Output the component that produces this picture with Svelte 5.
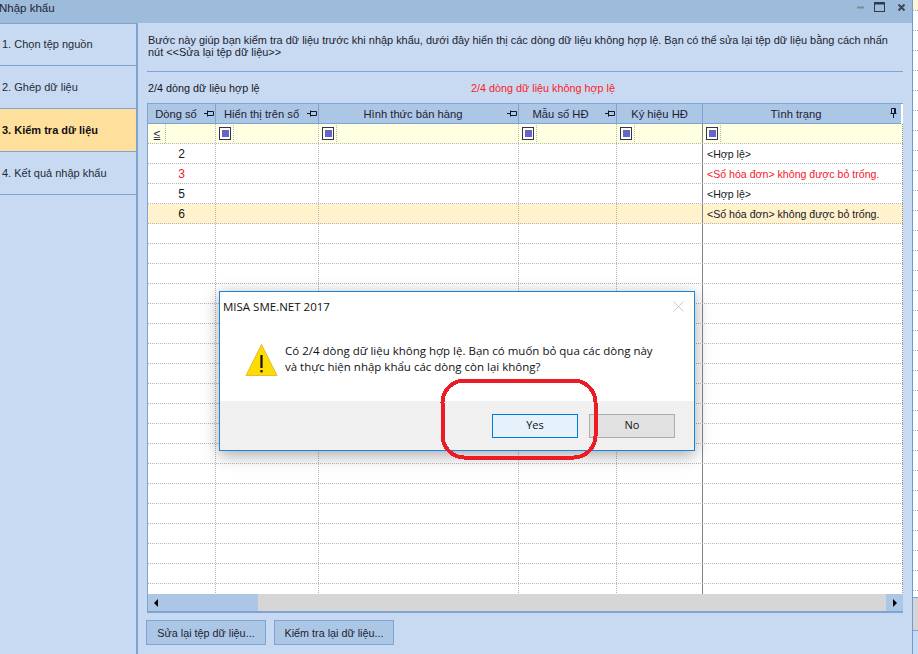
<script>
  const cols = [
    { t: 'Dòng số', pin: 'h' },
    { t: 'Hiển thị trên sổ', pin: 'h' },
    { t: 'Hình thức bán hàng', pin: 'h' },
    { t: 'Mẫu số HĐ', pin: 'h', cls: 'wide' },
    { t: 'Ký hiệu HĐ', pin: '', cls: 'nopin' },
    { t: 'Tình trạng', pin: 'v', cls: 'last' }
  ];
  const steps = ['1. Chọn tệp nguồn', '2. Ghép dữ liệu', '3. Kiểm tra dữ liệu', '4. Kết quả nhập khẩu'];
  const ok = '<Hợp lệ>';
  const bad = '<Số hóa đơn> không được bỏ trống.';
  const rows = [
    { n: '2', s: ok },
    { n: '3', s: bad, cls: 'err' },
    { n: '5', s: ok },
    { n: '6', s: bad, cls: 'sel' },
    ...Array.from({ length: 19 }, () => ({ n: '', s: '' }))
  ];
  const strip = Array.from({ length: 29 });
</script>

<div class="app">
  <div class="window">
    <header class="title">
      <span class="title-text">Nhập khẩu</span>
      <div class="controls">
        <svg width="7" height="3" viewBox="0 0 7 3"><rect width="7" height="2" y="0.5" fill="#7f8b99" /></svg>
        <svg width="11" height="10" viewBox="0 0 11 10"><rect x="0.5" y="0.5" width="10" height="9" fill="none" stroke="#303a48" /><rect x="0" y="0" width="11" height="2.5" fill="#303a48" /></svg>
        <svg class="close" width="7" height="7" viewBox="0 0 7 7"><path d="M.5.5l6 6M6.5.5l-6 6" stroke="#3d4753" stroke-width="2" /></svg>
      </div>
    </header>
    <div class="body">
      <nav class="side">
        {#each steps as s, i}
          <div class="step" class:active={i === 2}>{s}</div>
        {/each}
      </nav>
      <main class="main">
        <p class="intro">Bước này giúp bạn kiểm tra dữ liệu trước khi nhập khẩu, dưới đây hiển thị các dòng dữ liệu không hợp lệ. Bạn có thể sửa lại tệp dữ liệu bằng cách nhấn nút &lt;&lt;Sửa lại tệp dữ liệu&gt;&gt;</p>
        <div class="status">
          <span class="valid">2/4 dòng dữ liệu hợp lệ</span>
          <span class="invalid">2/4 dòng dữ liệu không hợp lệ</span>
        </div>
        <section class="grid">
          <div class="row head">
            {#each cols as c}
              <div class="hcell {c.cls ?? ''}">
                <span>{c.t}</span>
                {#if c.pin === 'h'}
                  <svg class="pin" width="10" height="7" viewBox="0 0 10 7"><path d="M0 3.5h3.5M3.5.5v6M3.5 1.5h6v4h-6" fill="none" stroke="#10182a" /></svg>
                {:else if c.pin === 'v'}
                  <svg class="pin pinv" width="7" height="10" viewBox="0 0 7 10"><path d="M1.5.5h4v5h-4zM.5 5.5h6M3.5 6v4" fill="none" stroke="#10182a" /><path d="M4.5 1v4" stroke="#10182a" /></svg>
                {/if}
              </div>
            {/each}
          </div>
          <div class="row filter">
            {#each cols as c, i}
              <div class="fcell" class:status-col={i === 5} class:before-status={i === 4}>
                {#if i === 0}
                  <span class="fbox le">≤</span>
                {:else}
                  <span class="fbox"><i></i></span>
                {/if}
              </div>
            {/each}
          </div>
          <div class="rows">
            {#each rows as r}
              <div class="row data {r.cls ?? ''}">
                <div class="cell num">{r.n}</div>
                <div class="cell"></div>
                <div class="cell"></div>
                <div class="cell"></div>
                <div class="cell"></div>
                <div class="cell state">{r.s}</div>
              </div>
            {/each}
          </div>
          <div class="hscroll">
            <div class="thumb"><svg width="5" height="8" viewBox="0 0 5 8"><path d="M4 0v8L0 4z" fill="#000" /></svg></div>
            <div class="track"></div>
            <div class="arrow"><svg width="5" height="8" viewBox="0 0 5 8"><path d="M0 0v8l4-4z" fill="#000" /></svg></div>
          </div>
        </section>
        <div class="actions">
          <button class="btn b1">Sửa lại tệp dữ liệu...</button>
          <button class="btn b2">Kiểm tra lại dữ liệu...</button>
        </div>
      </main>
    </div>
  </div>

  <aside class="strip">
    <div class="strip-top"></div>
    {#each strip as _}
      <div class="strip-row"></div>
    {/each}
    <div class="strip-grey"></div>
    <div class="strip-end"></div>
  </aside>

  <div class="dialog">
    <div class="d-title">
      <span>MISA SME.NET 2017</span>
      <svg width="11" height="11" viewBox="0 0 11 11"><path d="M.5.5l10 10M10.5.5l-10 10" stroke="#c9c9c9" /></svg>
    </div>
    <div class="d-body">
      <svg class="warn" width="33" height="33" viewBox="0 0 33 33">
        <path d="M16.5 1.5L32 32.5H1z" fill="#ffdc00" stroke="#e8b93a" />
        <rect x="15.4" y="12" width="2.2" height="13" fill="#111" />
        <rect x="15.4" y="27" width="2.2" height="2.4" fill="#111" />
      </svg>
      <p>Có 2/4 dòng dữ liệu không hợp lệ. Bạn có muốn bỏ qua các dòng này<br />và thực hiện nhập khẩu các dòng còn lại không?</p>
    </div>
    <div class="d-foot">
      <button class="d-btn yes">Yes</button>
      <button class="d-btn no">No</button>
    </div>
  </div>

  <svg class="mark" width="160" height="84" viewBox="0 0 160 84" shape-rendering="crispEdges">
    <rect x="2.5" y="2.5" width="153" height="77" rx="22" fill="none" stroke="#ed1c24" stroke-width="4" />
  </svg>
</div>

<style>
  :global(body) {
    margin: 0;
    background: #fff;
  }
  * {
    box-sizing: border-box;
  }
  .app {
    position: relative;
    display: flex;
    width: 918px;
    height: 654px;
    overflow: hidden;
    font-family: "Liberation Sans", Arial, sans-serif;
    font-size: 11px;
    color: #15171c;
  }
  .window {
    width: 913px;
    height: 654px;
    display: flex;
    flex-direction: column;
    background: #c8daf1;
    border-right: 1px solid #6f9bd2;
  }
  .title {
    height: 23px;
    flex: none;
    background: #9dbbdb;
    display: flex;
    align-items: center;
    justify-content: space-between;
    font-size: 11.5px;
    padding-right: 7px;
  }
  .title-text {
    margin-left: -1px;
    margin-top: -7px;
    color: #231f33;
  }
  .controls {
    display: flex;
    align-items: center;
    gap: 10px;
    margin-top: -9px;
  }
  .close {
    margin-left: 3px;
  }
  .body {
    flex: 1;
    display: flex;
    min-height: 0;
  }
  .side {
    width: 138px;
    flex: none;
    border-right: 2px solid #7fa3d2;
    border-top: 1px solid #7fa3d2;
  }
  .step {
    height: 43px;
    line-height: 43px;
    border-bottom: 1px solid #7fa3d2;
    padding-left: 2px;
    color: #232a38;
  }
  .step:first-child {
    height: 42px;
    line-height: 41px;
  }
  .step.active {
    background: #ffdf9c;
    font-weight: 700;
    color: #101010;
  }
  .main {
    flex: 1;
    min-width: 0;
    padding: 0 9px 0 9px;
    display: flex;
    flex-direction: column;
  }
  .intro {
    margin: 11px 0 0;
    height: 38px;
    line-height: 12px;
    font-size: 10.93px;
    padding-left: 1px;
    border-bottom: 1px solid #7fa3d2;
    color: #1b2230;
  }
  .status {
    height: 31px;
    flex: none;
    display: flex;
    align-items: center;
    line-height: 14px;
    font-size: 10.8px;
  }
  .valid {
    width: 324px;
    padding-left: 1px;
  }
  .invalid {
    color: #fb1a2a;
  }
  .grid {
    width: 756px;
    height: 510px;
    flex: none;
    display: flex;
    flex-direction: column;
    background: #fff;
    border: solid #7fa3d2;
    border-width: 1px 0 2px 1px;
  }
  .row {
    display: grid;
    grid-template-columns: 68px 103px 200px 98px 86px 200px;
    flex: none;
  }
  .head {
    height: 20px;
    background: #acc7e6;
    border-bottom: 1px solid #7fa3d2;
  }
  .hcell {
    position: relative;
    text-align: center;
    line-height: 20px;
    font-size: 11.2px;
    border-right: 1px solid #7fa3d2;
    color: #1c2233;
    padding-right: 11px;
  }
  .hcell.wide {
    padding-right: 14px;
  }
  .hcell.nopin {
    padding-right: 0;
  }
  .hcell.last {
    border-right: 2px solid #fff;
    padding-right: 12px;
  }
  .pin {
    position: absolute;
    right: 1px;
    top: 6px;
  }
  .pinv {
    right: 4px;
    top: 4px;
  }
  .filter {
    height: 20px;
    background: #ffffe1;
    border-bottom: 1px dotted #b5b5b5;
  }
  .fcell {
    border-right: 1px dotted #b5b5b5;
    padding: 3px 0 0 3px;
  }
  .fcell.status-col {
    border-right: 1px dotted #888;
  }
  .fcell.before-status {
    border-right: 1px solid #808690;
  }
  .fbox {
    display: flex;
    align-items: center;
    justify-content: center;
    width: 12px;
    height: 13px;
    border: 1px solid #2f2f6d;
    position: relative;
  }
  .fbox::after {
    content: "";
    position: absolute;
    top: -3px;
    bottom: -3px;
    left: 13px;
    border-right: 1px dotted #b5b5b5;
  }
  .fbox i {
    width: 7px;
    height: 7px;
    background: #6464cc;
  }
  .le {
    border: 0;
    width: 12px;
    text-decoration: underline;
    font-size: 12px;
    color: #1c1c58;
  }
  .le::after {
    left: 14px;
    top: -3px;
  }
  .rows {
    flex: 1;
    min-height: 0;
    overflow: hidden;
  }
  .data {
    height: 20px;
    line-height: 20px;
    border-bottom: 1px dotted #b5b5b5;
  }
  .cell {
    border-right: 1px dotted #b5b5b5;
    overflow: hidden;
    white-space: nowrap;
  }
  .cell:nth-child(5) {
    border-right: 1px solid #808690;
  }
  .cell.state {
    padding-left: 4px;
    border-right: 1px dotted #888;
    font-size: 10.6px;
  }
  .num {
    text-align: center;
    font-size: 12px;
  }
  .err {
    color: #f5162a;
  }
  .sel {
    background: #fff2cd;
  }
  .hscroll {
    height: 17px;
    flex: none;
    display: flex;
    background: #d6d6d6;
  }
  .thumb {
    width: 110px;
    background: #acc7e6;
    display: flex;
    align-items: center;
    padding-left: 6px;
  }
  .track {
    flex: 1;
  }
  .arrow {
    width: 17px;
    background: #acc7e6;
    display: flex;
    align-items: center;
    padding-left: 7px;
  }
  .actions {
    display: flex;
    gap: 8px;
    margin-top: 7px;
    margin-left: -1px;
    font-size: 10.8px;
  }
  .btn {
    height: 25px;
    background: #acc7e6;
    border: 1px solid #7fa3d2;
    font: inherit;
    color: #1c2233;
    padding: 0;
  }
  .b1 {
    width: 120px;
  }
  .b2 {
    width: 120px;
  }
  .strip {
    flex: 1;
    min-width: 0;
    display: flex;
    flex-direction: column;
    background: #fff;
  }
  .strip-top {
    height: 11px;
    flex: none;
    background: #fff6d8;
    border-bottom: 1px dotted #b5b5b5;
  }
  .strip-row {
    height: 20px;
    flex: none;
    border-bottom: 1px dotted #b5b5b5;
  }
  .strip-grey {
    height: 34px;
    flex: none;
    margin-top: 6px;
    background: #d6d6d6;
    border-top: 1px solid #7fa3d2;
    border-bottom: 1px solid #7fa3d2;
  }
  .strip-end {
    flex: 1;
    background: #c8daf1;
  }
  .dialog {
    position: absolute;
    left: 219px;
    top: 291px;
    width: 476px;
    height: 160px;
    background: #fff;
    border: 1px solid #1883d7;
    box-shadow: 0 4px 16px rgba(0, 0, 0, 0.35);
    display: flex;
    flex-direction: column;
    font-family: "Open Sans", "Noto Sans", sans-serif;
    font-size: 11.5px;
    color: #111;
  }
  .d-title {
    height: 28px;
    display: flex;
    justify-content: space-between;
    align-items: center;
    padding: 0 10px 0 3px;
  }
  .d-body {
    flex: 1;
    display: flex;
    align-items: flex-start;
    padding: 23px 0 0 25px;
  }
  .warn {
    flex: none;
  }
  .d-body p {
    margin: 0 0 0 7px;
    line-height: 16px;
    white-space: nowrap;
  }
  .d-foot {
    height: 49px;
    flex: none;
    background: #f0f0f0;
    display: flex;
    gap: 11px;
    padding: 13px 19px 0 272px;
  }
  .d-btn {
    width: 86px;
    height: 24px;
    font: inherit;
    font-size: 11px;
    color: #111;
    padding: 0 0 3px;
  }
  .yes {
    background: #e5f1fb;
    border: 1px solid #0078d7;
  }
  .no {
    background: #e1e1e1;
    border: 1px solid #adadad;
  }
  .mark {
    position: absolute;
    left: 440px;
    top: 378px;
  }
</style>
